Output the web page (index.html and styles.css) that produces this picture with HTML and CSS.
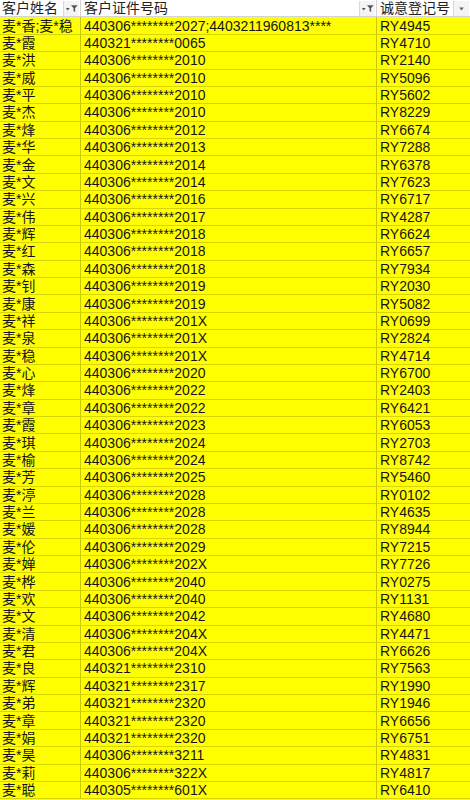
FILE: index.html
```html
<!DOCTYPE html>
<html lang="zh">
<head>
<meta charset="utf-8">
<link rel="stylesheet" href="styles.css">
</head>
<body>
<div class="sheet">
  <div class="c h n">客户姓名<span class="fbtn"><svg width="16" height="15" viewBox="0 0 16 15"><path d="M2 7h4l-2 2.5z" fill="#555"/><path d="M7.5 4h7l-2.7 3.3v4l-1.6-1v-3z" fill="#555"/></svg></span></div>
  <div class="c h id">客户证件号码<span class="fbtn"><svg width="16" height="15" viewBox="0 0 16 15"><path d="M2 7h4l-2 2.5z" fill="#555"/><path d="M7.5 4h7l-2.7 3.3v4l-1.6-1v-3z" fill="#555"/></svg></span></div>
  <div class="c h ry">诚意登记号<span class="fbtn"><svg width="16" height="15" viewBox="0 0 16 15"><path d="M5.5 6.5h5l-2.5 3z" fill="#666"/></svg></span></div>

  <div class="c n">麦*香;麦*稳</div><div class="c id">440306********2027;4403211960813****</div><div class="c ry">RY4945</div>
  <div class="c n">麦*霞</div><div class="c id">440321********0065</div><div class="c ry">RY4710</div>
  <div class="c n">麦*洪</div><div class="c id">440306********2010</div><div class="c ry">RY2140</div>
  <div class="c n">麦*威</div><div class="c id">440306********2010</div><div class="c ry">RY5096</div>
  <div class="c n">麦*平</div><div class="c id">440306********2010</div><div class="c ry">RY5602</div>
  <div class="c n">麦*杰</div><div class="c id">440306********2010</div><div class="c ry">RY8229</div>
  <div class="c n">麦*烽</div><div class="c id">440306********2012</div><div class="c ry">RY6674</div>
  <div class="c n">麦*华</div><div class="c id">440306********2013</div><div class="c ry">RY7288</div>
  <div class="c n">麦*金</div><div class="c id">440306********2014</div><div class="c ry">RY6378</div>
  <div class="c n">麦*文</div><div class="c id">440306********2014</div><div class="c ry">RY7623</div>
  <div class="c n">麦*兴</div><div class="c id">440306********2016</div><div class="c ry">RY6717</div>
  <div class="c n">麦*伟</div><div class="c id">440306********2017</div><div class="c ry">RY4287</div>
  <div class="c n">麦*辉</div><div class="c id">440306********2018</div><div class="c ry">RY6624</div>
  <div class="c n">麦*红</div><div class="c id">440306********2018</div><div class="c ry">RY6657</div>
  <div class="c n">麦*森</div><div class="c id">440306********2018</div><div class="c ry">RY7934</div>
  <div class="c n">麦*钊</div><div class="c id">440306********2019</div><div class="c ry">RY2030</div>
  <div class="c n">麦*康</div><div class="c id">440306********2019</div><div class="c ry">RY5082</div>
  <div class="c n">麦*祥</div><div class="c id">440306********201X</div><div class="c ry">RY0699</div>
  <div class="c n">麦*泉</div><div class="c id">440306********201X</div><div class="c ry">RY2824</div>
  <div class="c n">麦*稳</div><div class="c id">440306********201X</div><div class="c ry">RY4714</div>
  <div class="c n">麦*心</div><div class="c id">440306********2020</div><div class="c ry">RY6700</div>
  <div class="c n">麦*烽</div><div class="c id">440306********2022</div><div class="c ry">RY2403</div>
  <div class="c n">麦*章</div><div class="c id">440306********2022</div><div class="c ry">RY6421</div>
  <div class="c n">麦*霞</div><div class="c id">440306********2023</div><div class="c ry">RY6053</div>
  <div class="c n">麦*琪</div><div class="c id">440306********2024</div><div class="c ry">RY2703</div>
  <div class="c n">麦*榆</div><div class="c id">440306********2024</div><div class="c ry">RY8742</div>
  <div class="c n">麦*芳</div><div class="c id">440306********2025</div><div class="c ry">RY5460</div>
  <div class="c n">麦*渟</div><div class="c id">440306********2028</div><div class="c ry">RY0102</div>
  <div class="c n">麦*兰</div><div class="c id">440306********2028</div><div class="c ry">RY4635</div>
  <div class="c n">麦*媛</div><div class="c id">440306********2028</div><div class="c ry">RY8944</div>
  <div class="c n">麦*伦</div><div class="c id">440306********2029</div><div class="c ry">RY7215</div>
  <div class="c n">麦*婵</div><div class="c id">440306********202X</div><div class="c ry">RY7726</div>
  <div class="c n">麦*桦</div><div class="c id">440306********2040</div><div class="c ry">RY0275</div>
  <div class="c n">麦*欢</div><div class="c id">440306********2040</div><div class="c ry">RY1131</div>
  <div class="c n">麦*文</div><div class="c id">440306********2042</div><div class="c ry">RY4680</div>
  <div class="c n">麦*清</div><div class="c id">440306********204X</div><div class="c ry">RY4471</div>
  <div class="c n">麦*君</div><div class="c id">440306********204X</div><div class="c ry">RY6626</div>
  <div class="c n">麦*良</div><div class="c id">440321********2310</div><div class="c ry">RY7563</div>
  <div class="c n">麦*辉</div><div class="c id">440321********2317</div><div class="c ry">RY1990</div>
  <div class="c n">麦*弟</div><div class="c id">440321********2320</div><div class="c ry">RY1946</div>
  <div class="c n">麦*章</div><div class="c id">440321********2320</div><div class="c ry">RY6656</div>
  <div class="c n">麦*娟</div><div class="c id">440321********2320</div><div class="c ry">RY6751</div>
  <div class="c n">麦*昊</div><div class="c id">440306********3211</div><div class="c ry">RY4831</div>
  <div class="c n">麦*莉</div><div class="c id">440306********322X</div><div class="c ry">RY4817</div>
  <div class="c n">麦*聪</div><div class="c id">440305********601X</div><div class="c ry">RY6410</div>
</div>
</body>
</html>
```
FILE: styles.css
```css
html, body {
  margin: 0;
  padding: 0;
  background: #ffff00;
}
.sheet {
  display: grid;
  grid-template-columns: 81px 296px 93px;
  grid-auto-rows: 17.39px;
  width: 470px;
  font-family: "Liberation Sans", "Noto Sans CJK SC", sans-serif;
  font-size: 14px;
  color: #151515;
  background: #ffff00;
}
.c {
  box-sizing: border-box;
  display: flex;
  align-items: center;
  padding-left: 3px;
  border-bottom: 1px solid #d6d600;
  white-space: nowrap;
  overflow: hidden;
  line-height: 1;
}
.c.n, .c.id {
  border-right: 1px solid #c9c900;
}
.c.n {
  padding-left: 2px;
}
.c.h {
  background: #ffffff;
  border-bottom: 1px solid #d4d4d4;
  position: relative;
  color: #222;
}
.c.h.n, .c.h.id {
  border-right: 1px solid #d4d4d4;
}
.fbtn {
  position: absolute;
  right: 1px;
  top: 1px;
  width: 16px;
  height: 15px;
  box-sizing: border-box;
  border-left: 1px solid #d8d8d8;
  background: #f4f4f4;
  display: flex;
}
```
